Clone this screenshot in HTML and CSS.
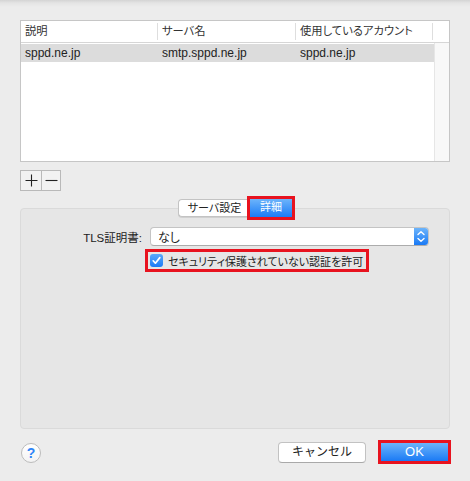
FILE: index.html
```html
<!DOCTYPE html>
<html lang="ja">
<head>
<meta charset="utf-8">
<link rel="stylesheet" href="styles.css">
</head>
<body>
<div class="sheet">
  <div class="table">
    <div class="thead">
      <div class="th">説明</div>
      <div class="th">サーバ名</div>
      <div class="th">使用しているアカウント</div>
      <div class="th th-last"></div>
    </div>
    <div class="tbody">
      <div class="rows">
        <div class="tr selected">
          <div class="td">sppd.ne.jp</div>
          <div class="td">smtp.sppd.ne.jp</div>
          <div class="td">sppd.ne.jp</div>
        </div>
      </div>
      <div class="lane"></div>
    </div>
  </div>

  <div class="pm">
    <div class="pm-btn">
      <svg width="13" height="13" viewBox="0 0 13 13"><path d="M6.5 0.5V12.5M0.5 6.5H12.5" stroke="#222" stroke-width="1.1" fill="none"/></svg>
    </div>
    <div class="pm-btn pm-right">
      <svg width="13" height="13" viewBox="0 0 13 13"><path d="M0.5 6.5H12.5" stroke="#222" stroke-width="1.1" fill="none"/></svg>
    </div>
  </div>

  <div class="panel">
    <div class="tabs">
      <div class="tab">サーバ設定</div>
      <div class="tab tab-active">詳細</div>
    </div>
    <div class="tls-row">
      <div class="label">TLS証明書:</div>
      <div class="select">
        <span class="select-text">なし</span>
        <span class="stepper">
          <svg width="14" height="17" viewBox="0 0 14 17"><path d="M4 6.5L7 3.8L10 6.5M4 10.5L7 13.2L10 10.5" stroke="#fff" stroke-width="1.4" fill="none" stroke-linecap="round" stroke-linejoin="round"/></svg>
        </span>
      </div>
    </div>
    <div class="check-row">
      <div class="check-box">
        <span class="checkbox">
          <svg width="13" height="13" viewBox="0 0 13 13"><path d="M3.2 6.8L5.4 9.2L9.8 3.6" stroke="#fff" stroke-width="1.7" fill="none" stroke-linecap="round" stroke-linejoin="round"/></svg>
        </span>
        <span class="check-text">セキュリティ保護されていない認証を許可</span>
      </div>
    </div>
  </div>

  <div class="footer">
    <div class="help">?</div>
    <div class="actions">
      <div class="btn">キャンセル</div>
      <div class="ok-wrap"><div class="btn-ok">OK</div></div>
    </div>
  </div>
</div>
</body>
</html>
```

FILE: styles.css
```css
* { box-sizing: border-box; }
html, body { margin: 0; padding: 0; }
body {
  width: 470px;
  height: 481px;
  background: linear-gradient(#d4d4d4 0px, #e4e4e4 3px, #ececec 7px, #ececec 100%);
  font-family: "Liberation Sans", "Noto Sans CJK JP", sans-serif;
  font-size: 12px;
  color: #262626;
  font-feature-settings: "palt";
  overflow: hidden;
}
.sheet { padding: 20px 20px 0 20px; }

/* table */
.table {
  width: 430px;
  height: 142px;
  border: 1px solid #c6c6c6;
  background: #fff;
  display: flex;
  flex-direction: column;
}
.thead {
  height: 22px;
  display: flex;
  border-bottom: 1px solid #d6d6d6;
  align-items: center;
}
.th {
  height: 17px;
  line-height: 17px;
  padding-left: 4px;
  color: #333;
  font-size: 11.3px;
  border-right: 1px solid #dedede;
}
.th:nth-child(1) { width: 137px; }
.th:nth-child(2) { width: 138px; }
.th:nth-child(3) { width: 137px; }
.th-last { flex: 1; border-right: none; }
.tbody { flex: 1; display: flex; }
.rows { width: 413px; padding-top: 1px; }
.tr { display: flex; height: 18px; align-items: center; }
.selected { background: #dcdcdc; }
.td { padding-left: 4px; color: #222; }
.td:nth-child(1) { width: 137px; }
.td:nth-child(2) { width: 138px; }
.td:nth-child(3) { flex: 1; }
.lane { flex: 1; background: #f8f8f8; border-left: 1px solid #e6e6e6; }

/* plus minus */
.pm {
  margin-top: 8px;
  display: flex;
  width: 41px;
  height: 21px;
  border: 1px solid #b9b9b9;
  background: #f2f2f2;
}
.pm-btn {
  width: 20px;
  display: flex;
  align-items: center;
  justify-content: center;
}
.pm-right { border-left: 1px solid #b9b9b9; width: 19px; }

/* panel */
.panel {
  margin-top: 17px;
  width: 430px;
  height: 221px;
  background: #e6e6e6;
  border: 1px solid #dadada;
  border-radius: 4px;
}
.tabs {
  margin: -10px auto 0;
  width: 114px;
  height: 18px;
  display: flex;
}
.tab {
  width: 72px;
  height: 18px;
  line-height: 17px;
  text-align: center;
  font-size: 11px;
  background: #fff;
  border: 1px solid #c3c3c3;
  border-right: none;
  border-radius: 4px 0 0 4px;
  box-shadow: 0 1px 0 #d0d0d0;
  color: #222;
}
.tab-active {
  width: 42px;
  border: none;
  border-radius: 0;
  color: #fff;
  background: linear-gradient(#6cb4fb, #1c7cf6);
  outline: 3px solid #e8131f;
  box-shadow: none;
}
.tls-row {
  margin-top: 10px;
  display: flex;
  align-items: center;
  height: 19px;
}
.label {
  width: 121px;
  text-align: right;
  color: #222;
  font-size: 11.5px;
}
.select {
  margin-left: 8px;
  width: 279px;
  height: 19px;
  background: #fff;
  border: 1px solid #c4c4c4;
  border-bottom-color: #acacac;
  border-radius: 4px;
  display: flex;
  align-items: center;
  justify-content: space-between;
  overflow: hidden;
}
.select-text { padding-left: 7px; }
.stepper {
  width: 14px;
  height: 17px;
  background: linear-gradient(#6cb4fb, #1a7af5);
  display: flex;
}
.check-row {
  margin-top: 3px;
  padding-left: 124px;
}
.check-box {
  display: inline-flex;
  align-items: center;
  border: 3px solid #e8131f;
  padding: 1px 3px 1px 2px;
  height: 23px;
}
.checkbox {
  width: 13px;
  height: 13px;
  border-radius: 3px;
  background: linear-gradient(#5aa8fa, #1c7cf6);
  display: flex;
}
.check-text { margin-left: 5px; color: #222; font-size: 11px; }

/* footer */
.footer {
  margin-top: 11px;
  display: flex;
  align-items: center;
  justify-content: space-between;
  height: 24px;
}
.help {
  margin-left: 1px;
  margin-top: 2px;
  width: 20px;
  height: 20px;
  border-radius: 50%;
  background: linear-gradient(#ffffff, #f3f3f3);
  border: 1px solid #bcbcbc;
  color: #2f85f7;
  font-size: 14px;
  font-weight: bold;
  text-align: center;
  line-height: 18px;
}
.actions { display: flex; align-items: center; margin-right: -1px; }
.btn {
  width: 88px;
  height: 21px;
  line-height: 19px;
  text-align: center;
  background: #fff;
  border: 1px solid #c2c2c2;
  border-bottom-color: #a9a9a9;
  border-radius: 4px;
  color: #222;
  margin-right: 12px;
  font-feature-settings: normal;
}
.ok-wrap {
  border: 3px solid #e8131f;
  width: 73px;
  height: 24px;
}
.btn-ok {
  height: 18px;
  line-height: 18px;
  text-align: center;
  color: #fff;
  font-size: 13px;
  background: linear-gradient(#6cb4fb, #1a7af5);
}
```
